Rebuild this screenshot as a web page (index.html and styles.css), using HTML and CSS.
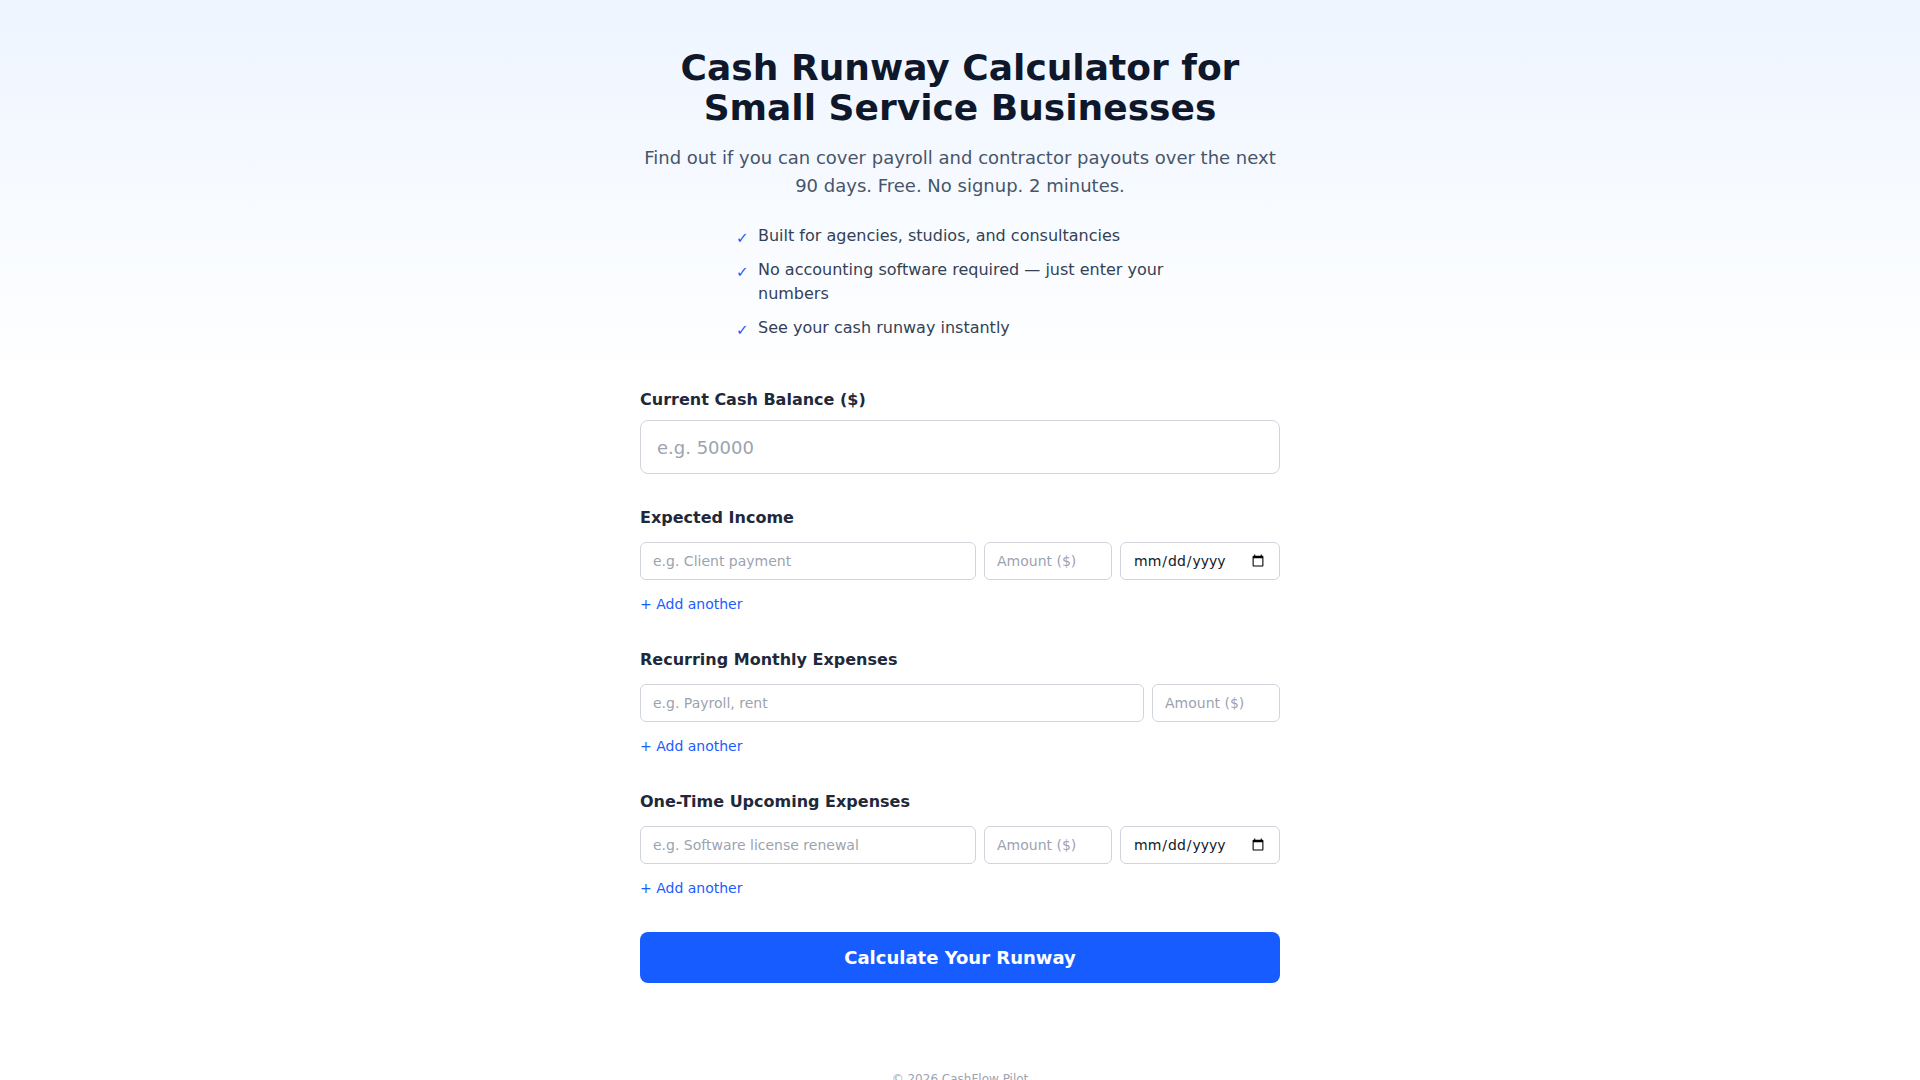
FILE: index.html
```html
<!DOCTYPE html>
<html lang="en">
<head>
  <meta charset="UTF-8">
  <meta name="viewport" content="width=device-width, initial-scale=1.0">
  <title>Cash Runway Calculator</title>
  <link rel="stylesheet" href="styles.css">
</head>
<body>
  <main class="page">
    <header class="intro">
      <h1>Cash Runway Calculator for Small Service Businesses</h1>
      <p class="lead">Find out if you can cover payroll and contractor payouts over the next 90 days. Free. No signup. 2 minutes.</p>
      <ul class="perks">
        <li><span class="tick">✓</span><span>Built for agencies, studios, and consultancies</span></li>
        <li><span class="tick">✓</span><span>No accounting software required — just enter your numbers</span></li>
        <li><span class="tick">✓</span><span>See your cash runway instantly</span></li>
      </ul>
    </header>

    <form id="runwayForm" class="calc">
      <section class="block">
        <label class="label label-main" for="balance">Current Cash Balance ($)</label>
        <input id="balance" class="field-big" type="number" placeholder="e.g. 50000">
      </section>

      <!-- Entradas de dinero -->
      <section class="block">
        <h2 class="label">Expected Income</h2>
        <div class="rows" id="incomeRows">
          <div class="row">
            <input class="name" type="text" placeholder="e.g. Client payment">
            <input class="amount" type="number" placeholder="Amount ($)">
            <input class="date" type="date">
          </div>
        </div>
        <button type="button" class="add" data-target="incomeRows">+ Add another</button>
      </section>

      <section class="block">
        <h2 class="label">Recurring Monthly Expenses</h2>
        <div class="rows" id="recurringRows">
          <div class="row">
            <input class="name" type="text" placeholder="e.g. Payroll, rent">
            <input class="amount" type="number" placeholder="Amount ($)">
          </div>
        </div>
        <button type="button" class="add" data-target="recurringRows">+ Add another</button>
      </section>

      <section class="block">
        <h2 class="label">One-Time Upcoming Expenses</h2>
        <div class="rows" id="oneTimeRows">
          <div class="row">
            <input class="name" type="text" placeholder="e.g. Software license renewal">
            <input class="amount" type="number" placeholder="Amount ($)">
            <input class="date" type="date">
          </div>
        </div>
        <button type="button" class="add" data-target="oneTimeRows">+ Add another</button>
      </section>

      <button type="submit" class="submit">Calculate Your Runway</button>
    </form>

    <footer class="foot">© 2026 CashFlow Pilot</footer>
  </main>

  <script>
    // Duplicar la primera fila vacía
    document.querySelectorAll('.add').forEach(btn => {
      btn.addEventListener('click', () => {
        const rows = document.getElementById(btn.dataset.target);
        const copy = rows.firstElementChild.cloneNode(true);
        copy.querySelectorAll('input').forEach(i => i.value = '');
        rows.appendChild(copy);
      });
    });

    document.getElementById('runwayForm').addEventListener('submit', (event) => {
      event.preventDefault();
    });
  </script>
</body>
</html>
```

FILE: styles.css
```css
* {
  box-sizing: border-box;
}

body {
  margin: 0;
  font-family: "DejaVu Sans", Verdana, sans-serif;
  color: #0f172a;
  background: linear-gradient(180deg, #eef5ff 0px, #ffffff 380px) no-repeat;
  background-color: #ffffff;
  min-height: 100vh;
}

.page {
  max-width: 640px;
  margin: 0 auto;
  padding: 48px 0 40px;
}

.intro {
  text-align: center;
}

h1 {
  margin: 0;
  font-size: 36px;
  line-height: 1.1;
  font-weight: 700;
  color: #0f172a;
}

.lead {
  margin: 17px 0 0;
  font-size: 18px;
  line-height: 28px;
  color: #475569;
}

.perks {
  list-style: none;
  max-width: 448px;
  margin: 24px auto 0;
  padding: 0;
  text-align: left;
  color: #334155;
  font-size: 16px;
  line-height: 24px;
}

.perks li {
  display: flex;
  margin-bottom: 10px;
}

.perks li:last-child {
  margin-bottom: 0;
}

.tick {
  flex: none;
  width: 22px;
  font-size: 15px;
  line-height: 24px;
  position: relative;
  top: 2px;
  color: #1a5cff;
}

.calc {
  margin-top: 48px;
}

.block {
  margin-bottom: 32px;
}

.label {
  display: block;
  margin: 0 0 12px;
  font-size: 16px;
  line-height: 24px;
  font-weight: 700;
  color: #1e293b;
}

.label-main {
  margin-bottom: 8px;
}

input {
  font-family: inherit;
  color: #111827;
  background: #fff;
  border: 1px solid #d1d5db;
  outline: none;
}

input::placeholder {
  color: #9ca3af;
}

.field-big {
  width: 100%;
  height: 54px;
  padding: 0 16px;
  font-size: 18px;
  border-radius: 8px;
}

.rows {
  display: flex;
  flex-direction: column;
  gap: 8px;
}

.row {
  display: flex;
  gap: 8px;
}

.row input {
  height: 38px;
  padding: 0 12px;
  font-size: 14px;
  border-radius: 6px;
}

.row .name {
  flex: 1;
  min-width: 0;
}

.row .amount {
  width: 128px;
}

.row .date {
  width: 160px;
}

.add {
  display: block;
  margin-top: 12px;
  padding: 0;
  border: none;
  background: none;
  font-family: inherit;
  font-size: 14px;
  line-height: 24px;
  color: #1a5cff;
  cursor: pointer;
}

.submit {
  display: block;
  width: 100%;
  padding: 12px;
  border: none;
  border-radius: 8px;
  background-color: #175cff;
  color: #fff;
  font-family: inherit;
  font-size: 18px;
  line-height: 27px;
  font-weight: 700;
  cursor: pointer;
}

.foot {
  margin-top: 89px;
  text-align: center;
  font-size: 12px;
  color: #9ca3af;
}
```
